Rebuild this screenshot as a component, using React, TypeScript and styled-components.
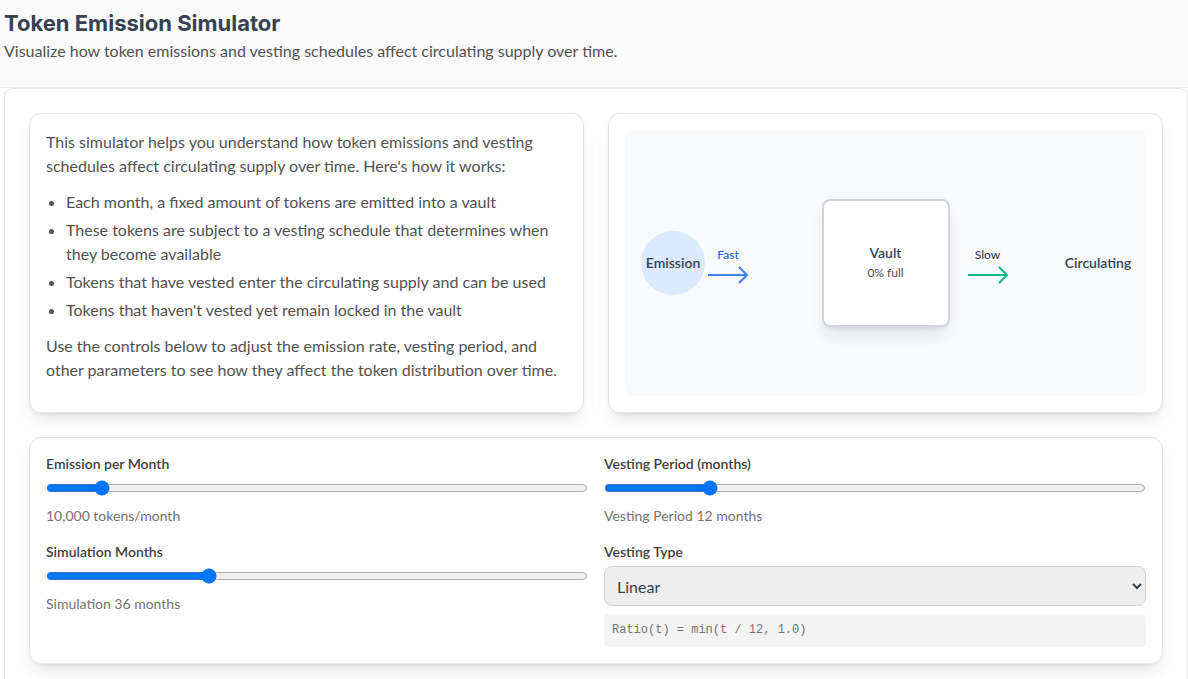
import React, { useState } from "react";
import styled, { createGlobalStyle } from "styled-components";

const GlobalStyle = createGlobalStyle`
  *, *::before, *::after { box-sizing: border-box; }
  body {
    margin: 0;
    background: #ffffff;
    color: #525252;
    font-family: Lato, "Liberation Sans", sans-serif;
    font-size: 16px;
    line-height: 24px;
  }
  h1, p, ul { margin: 0; }
`;

const shadow = "0 10px 15px -3px rgba(0, 0, 0, 0.1), 0 4px 6px -4px rgba(0, 0, 0, 0.1)";

const Header = styled.header`
  padding: 7px 4px 24px;
  background: #fafafa;
  border-bottom: 1px solid #e5e5e5;
`;

const Title = styled.h1`
  color: #374151;
  font-family: Inter, "Liberation Sans", sans-serif;
  font-size: 22px;
  font-weight: 700;
  line-height: 32px;
`;

const Panel = styled.main`
  display: grid;
  gap: 24px;
  margin-left: 4px;
  padding: 24px;
  border: 1px solid #e5e5e5;
  border-radius: 8px;
`;

const Columns = styled.div<{ $gap: number }>`
  display: grid;
  grid-template-columns: repeat(2, minmax(0, 1fr));
  gap: ${(p) => p.$gap}px;
`;

const Card = styled.section`
  padding: 16px;
  background: #ffffff;
  border: 1px solid #e5e5e5;
  border-radius: 12px;
  box-shadow: ${shadow};
`;

const Points = styled.ul`
  display: grid;
  gap: 4px;
  margin: 12px 0;
  padding-left: 20px;
`;

const Diagram = styled.div`
  display: grid;
  grid-template-columns: 64px 1fr 128px 1fr 64px;
  align-items: center;
  min-height: 266px;
  padding: 16px;
  background: #f8fafc;
  border-radius: 8px;
`;

const Stage = styled.div<{ $fill?: string }>`
  display: flex;
  align-items: center;
  justify-content: center;
  height: 64px;
  border-radius: 50%;
  background: ${(p) => p.$fill ?? "transparent"};
  color: #374151;
  font-size: 14px;
  font-weight: 600;
  line-height: 20px;
`;

const Vault = styled.div`
  display: flex;
  flex-direction: column;
  align-items: center;
  justify-content: center;
  height: 128px;
  background: #ffffff;
  border: 2px solid #d1d5db;
  border-radius: 8px;
  box-shadow: ${shadow};
  font-size: 12px;
  line-height: 20px;
`;

const VaultName = styled.span`
  color: #374151;
  font-size: 14px;
  font-weight: 600;
`;

const Flow = styled.div<{ $color: string; $start: number }>`
  display: flex;
  flex-direction: column;
  align-items: center;
  width: 40px;
  margin-left: ${(p) => p.$start}px;
  padding-top: 8px;
  color: ${(p) => p.$color};
  font-size: 12px;
  font-weight: 500;
  line-height: 16px;
`;

const Field = styled.div`
  display: flex;
  flex-direction: column;
`;

const Label = styled.label`
  margin-bottom: 4px;
  color: #404040;
  font-size: 14px;
  font-weight: 600;
  line-height: 20px;
`;

const Slider = styled.input`
  width: 100%;
  height: 16px;
  margin: 2px 0 10px;
`;

const Value = styled.output`
  color: #737373;
  font-size: 14px;
  line-height: 20px;
`;

const Select = styled.select`
  width: 100%;
  height: 40px;
  padding: 0 8px;
  background: #eeeeee;
  border: 1px solid #d4d4d4;
  border-radius: 8px;
  color: #374151;
  font: inherit;
`;

const Formula = styled.code`
  margin-top: 8px;
  padding: 8px;
  background: #f4f4f4;
  border-radius: 4px;
  color: #737373;
  font-family: "Liberation Mono", monospace;
  font-size: 12px;
  line-height: 17px;
`;

function Arrow({ color }: { color: string }) {
  return (
    <svg width="40" height="24" viewBox="0 0 40 24" fill="none" stroke={color} strokeWidth="2" aria-hidden="true">
      <path d="M0 12H39M31 4l8 8-8 8" />
    </svg>
  );
}

interface RangeProps {
  id: string;
  label: string;
  min: number;
  max: number;
  value: number;
  onChange: (value: number) => void;
  text: string;
}

function RangeField({ id, label, min, max, value, onChange, text }: RangeProps) {
  return (
    <Field>
      <Label htmlFor={id}>{label}</Label>
      <Slider
        id={id}
        type="range"
        min={min}
        max={max}
        value={value}
        onChange={(e) => onChange(Number(e.target.value))}
      />
      <Value htmlFor={id}>{text}</Value>
    </Field>
  );
}

export default function App() {
  const [emission, setEmission] = useState(10000);
  const [vesting, setVesting] = useState(12);
  const [months, setMonths] = useState(36);
  const [type, setType] = useState("linear");

  return (
    <>
      <GlobalStyle />
      <Header>
        <Title>Token Emission Simulator</Title>
        <p>Visualize how token emissions and vesting schedules affect circulating supply over time.</p>
      </Header>
      <Panel>
        <Columns $gap={24}>
          <Card>
            <p>
              This simulator helps you understand how token emissions and vesting schedules affect circulating supply
              over time. Here's how it works:
            </p>
            <Points>
              <li>Each month, a fixed amount of tokens are emitted into a vault</li>
              <li>These tokens are subject to a vesting schedule that determines when they become available</li>
              <li>Tokens that have vested enter the circulating supply and can be used</li>
              <li>Tokens that haven't vested yet remain locked in the vault</li>
            </Points>
            <p>
              Use the controls below to adjust the emission rate, vesting period, and other parameters to see how they
              affect the token distribution over time.
            </p>
          </Card>
          <Card>
            <Diagram>
              <Stage $fill="#dbeafe">Emission</Stage>
              <Flow $color="#2563eb" $start={3}>
                Fast
                <Arrow color="#3b82f6" />
              </Flow>
              <Vault>
                <VaultName>Vault</VaultName>
                0% full
              </Vault>
              <Flow $color="#374151" $start={18}>
                Slow
                <Arrow color="#10b981" />
              </Flow>
              <Stage>Circulating</Stage>
            </Diagram>
          </Card>
        </Columns>
        <Card>
          <Columns $gap={16}>
            <RangeField
              id="emission"
              label="Emission per Month"
              min={1000}
              max={100000}
              value={emission}
              onChange={setEmission}
              text={`${emission.toLocaleString("en-US")} tokens/month`}
            />
            <RangeField
              id="vesting"
              label="Vesting Period (months)"
              min={1}
              max={60}
              value={vesting}
              onChange={setVesting}
              text={`Vesting Period ${vesting} months`}
            />
            <RangeField
              id="months"
              label="Simulation Months"
              min={1}
              max={120}
              value={months}
              onChange={setMonths}
              text={`Simulation ${months} months`}
            />
            <Field>
              <Label htmlFor="type">Vesting Type</Label>
              <Select id="type" value={type} onChange={(e) => setType(e.target.value)}>
                <option value="linear">Linear</option>
                <option value="cliff">Cliff</option>
              </Select>
              <Formula>
                {type === "linear" ? `Ratio(t) = min(t / ${vesting}, 1.0)` : `Ratio(t) = t < ${vesting} ? 0 : 1`}
              </Formula>
            </Field>
          </Columns>
        </Card>
      </Panel>
    </>
  );
}
